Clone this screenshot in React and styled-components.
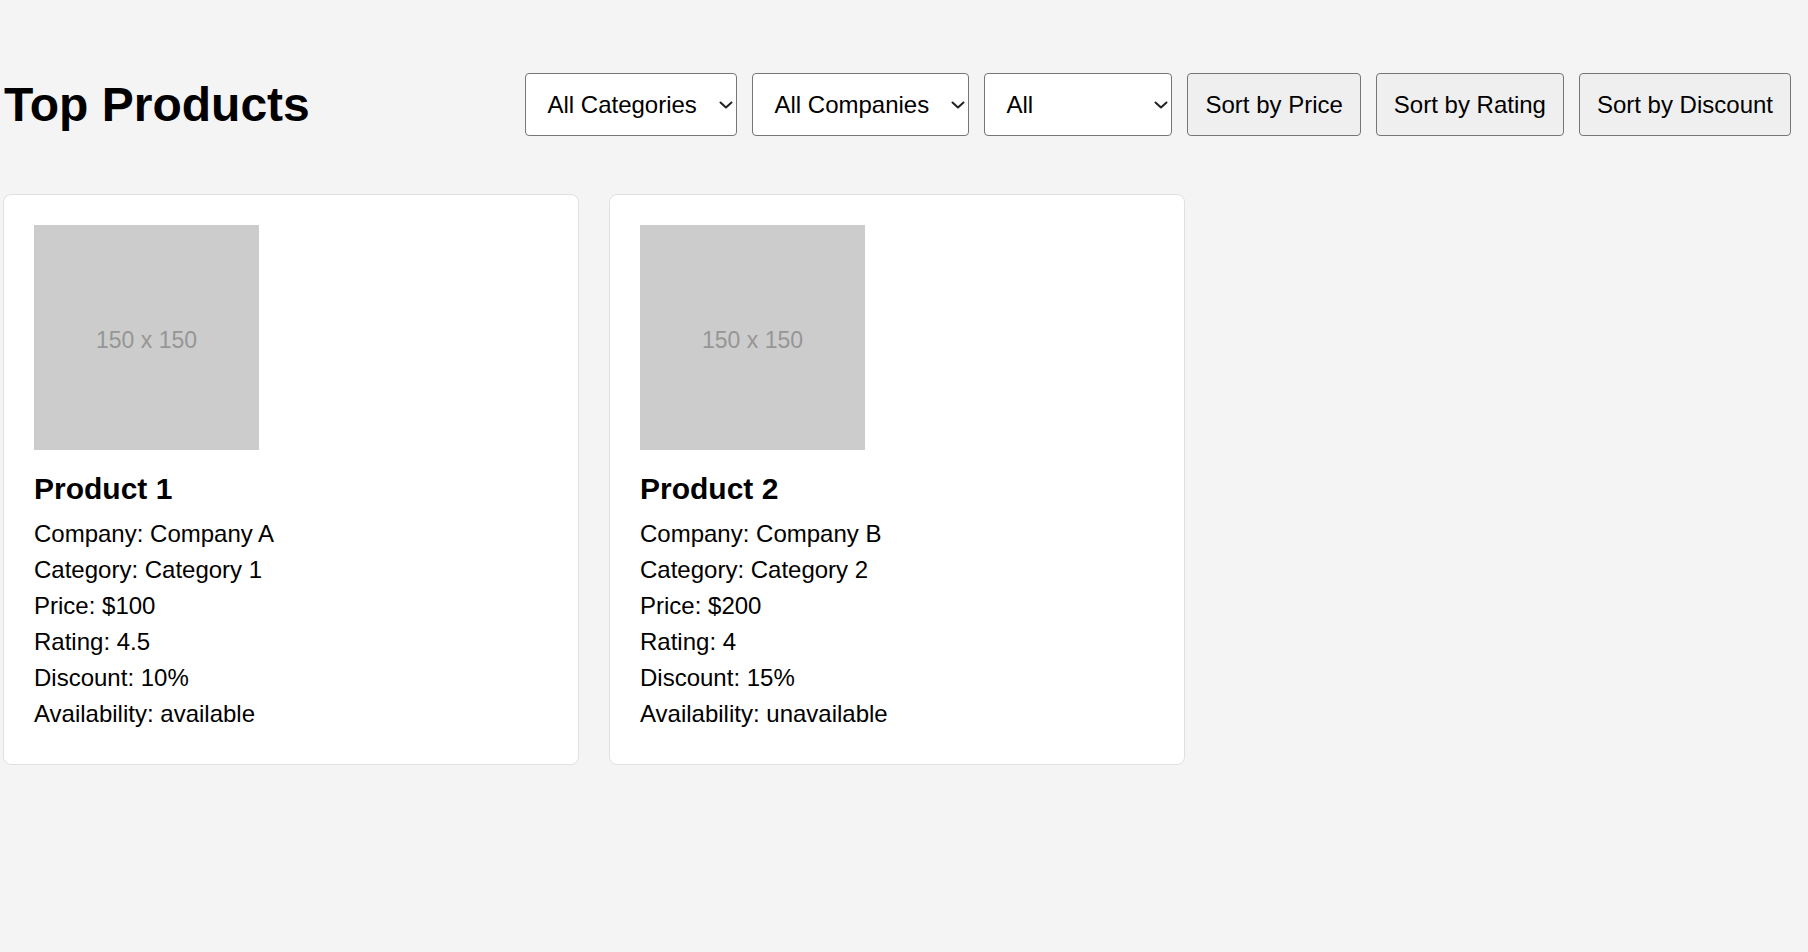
import styled, { createGlobalStyle } from "styled-components";

const GlobalStyle = createGlobalStyle`
  html, body {
    margin: 0;
    padding: 0;
    background: #f4f4f4;
    font-family: "Liberation Sans", Arial, sans-serif;
    color: #000;
  }
`;

const Page = styled.div`
  min-height: 952px;
  box-sizing: border-box;
  padding: 73px 17px 40px 3px;
  background: #f4f4f4;
`;

const Header = styled.header`
  display: flex;
  align-items: center;
  justify-content: space-between;
  margin-bottom: 58px;
`;

const Title = styled.h1`
  margin: 0;
  font-size: 48px;
  font-weight: 700;
  line-height: normal;
  padding-left: 1px;
`;

const Controls = styled.div`
  display: flex;
  align-items: center;
  gap: 15px;
`;

const SelectBox = styled.div`
  position: relative;
  display: inline-flex;
`;

const Select = styled.select`
  appearance: none;
  -webkit-appearance: none;
  box-sizing: border-box;
  width: ${(p) => p.$width}px;
  height: 63px;
  padding: 0 24px 0 21px;
  border: 1px solid #767676;
  border-radius: 4px;
  background: #fff;
  font-family: inherit;
  font-size: 24px;
  color: #000;
  outline: none;
`;

const Chevron = styled.svg`
  position: absolute;
  right: 0;
  top: 50%;
  transform: translateY(-50%);
  pointer-events: none;
`;

const Button = styled.button`
  box-sizing: border-box;
  height: 63px;
  padding: 0 17px;
  border: 1px solid #767676;
  border-radius: 4px;
  background: #efefef;
  font-family: inherit;
  font-size: 24px;
  color: #000;
  cursor: pointer;
`;

const Grid = styled.div`
  display: grid;
  grid-template-columns: repeat(3, 1fr);
  gap: 30px;
  align-items: start;
`;

const Card = styled.div`
  background: #fff;
  border: 1px solid #e0e0e0;
  border-radius: 8px;
  padding: 30px 30px 28px;
`;

const Placeholder = styled.div`
  box-sizing: border-box;
  width: 225px;
  height: 225px;
  padding-top: 6px;
  background: #cccccc;
  color: #969696;
  font-size: 23px;
  display: flex;
  align-items: center;
  justify-content: center;
`;

const Name = styled.h3`
  margin: 22px 0 14px;
  font-size: 30px;
  font-weight: 700;
  line-height: normal;
`;

const Detail = styled.p`
  margin: 8px 0;
  font-size: 24px;
  line-height: normal;
`;

const products = [
  {
    name: "Product 1",
    company: "Company A",
    category: "Category 1",
    price: 100,
    rating: 4.5,
    discount: 10,
    availability: "available",
  },
  {
    name: "Product 2",
    company: "Company B",
    category: "Category 2",
    price: 200,
    rating: 4,
    discount: 15,
    availability: "unavailable",
  },
];

const Dropdown = ({ width, options }) => (
  <SelectBox>
    <Select $width={width}>
      {options.map((o) => (
        <option key={o}>{o}</option>
      ))}
    </Select>
    <Chevron width="22" height="24" viewBox="0 0 22 24">
      <polyline
        points="5.5,9.5 11,14.5 16.5,9.5"
        fill="none"
        stroke="#222"
        strokeWidth="2"
        strokeLinecap="round"
        strokeLinejoin="round"
      />
    </Chevron>
  </SelectBox>
);

const App = () => {
  return (
    <Page>
      <GlobalStyle />
      <Header>
        <Title>Top Products</Title>
        <Controls>
          <Dropdown width={212} options={["All Categories", "Category 1", "Category 2"]} />
          <Dropdown width={217} options={["All Companies", "Company A", "Company B"]} />
          <Dropdown width={188} options={["All", "available", "unavailable"]} />
          <Button>Sort by Price</Button>
          <Button>Sort by Rating</Button>
          <Button>Sort by Discount</Button>
        </Controls>
      </Header>
      <Grid>
        {products.map((p) => (
          <Card key={p.name}>
            <Placeholder>150 x 150</Placeholder>
            <Name>{p.name}</Name>
            <Detail>Company: {p.company}</Detail>
            <Detail>Category: {p.category}</Detail>
            <Detail>Price: ${p.price}</Detail>
            <Detail>Rating: {p.rating}</Detail>
            <Detail>Discount: {p.discount}%</Detail>
            <Detail>Availability: {p.availability}</Detail>
          </Card>
        ))}
      </Grid>
    </Page>
  );
};

export default App;
